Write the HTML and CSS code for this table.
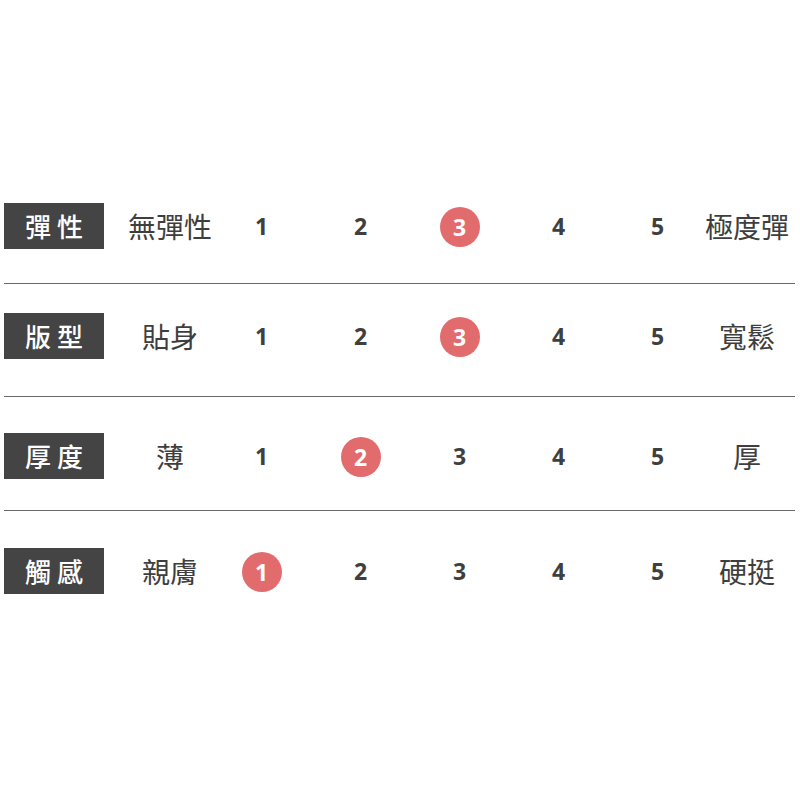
FILE: index.html
```html
<!DOCTYPE html>
<html lang="zh-Hant">
<head>
<meta charset="utf-8">
<title>尺寸感受</title>
<link rel="stylesheet" href="styles.css">
</head>
<body>
<div class="chart">
  <div class="row row-1">
    <div class="label">彈性</div>
    <div class="cell text">無彈性</div>
    <div class="cell num">1</div>
    <div class="cell num">2</div>
    <div class="cell num"><span class="dot">3</span></div>
    <div class="cell num">4</div>
    <div class="cell num">5</div>
    <div class="cell text">極度彈</div>
  </div>
  <div class="row row-2">
    <div class="label">版型</div>
    <div class="cell text">貼身</div>
    <div class="cell num">1</div>
    <div class="cell num">2</div>
    <div class="cell num"><span class="dot">3</span></div>
    <div class="cell num">4</div>
    <div class="cell num">5</div>
    <div class="cell text">寬鬆</div>
  </div>
  <div class="row row-3">
    <div class="label">厚度</div>
    <div class="cell text">薄</div>
    <div class="cell num">1</div>
    <div class="cell num"><span class="dot">2</span></div>
    <div class="cell num">3</div>
    <div class="cell num">4</div>
    <div class="cell num">5</div>
    <div class="cell text">厚</div>
  </div>
  <div class="row row-4">
    <div class="label">觸感</div>
    <div class="cell text">親膚</div>
    <div class="cell num"><span class="dot">1</span></div>
    <div class="cell num">2</div>
    <div class="cell num">3</div>
    <div class="cell num">4</div>
    <div class="cell num">5</div>
    <div class="cell text">硬挺</div>
  </div>
</div>
</body>
</html>
```

FILE: styles.css
```css
html, body {
  margin: 0;
  padding: 0;
  background: #ffffff;
}

body {
  font-family: "Noto Sans CJK TC", "Noto Sans", sans-serif;
  color: #404040;
}

.chart {
  padding: 170px 5px 0 4px;
  width: 791px;
}

.row {
  box-sizing: border-box;
  height: 113.5px;
  display: grid;
  grid-template-columns: 124px 84px repeat(5, 99px) 80px;
  grid-template-rows: 46px;
  align-items: center;
  border-bottom: 1px solid #6a6a6a;
}

.row-1 { padding-top: 33px; }
.row-2 { padding-top: 29.5px; }
.row-3 { padding-top: 36px; }
.row-4 { padding-top: 37.5px; border-bottom: none; }

.label {
  width: 100px;
  height: 46px;
  background: #444444;
  color: #ffffff;
  font-size: 26px;
  font-weight: 500;
  letter-spacing: 6px;
  text-indent: 6px;
  line-height: 46px;
  text-align: center;
  justify-self: start;
}

.cell {
  display: flex;
  justify-content: center;
  align-items: center;
  white-space: nowrap;
}

.text {
  font-size: 28px;
  font-weight: 400;
  color: #3e3e3e;
  line-height: 1;
}

.num {
  font-family: "Open Sans", "Liberation Sans", sans-serif;
  font-weight: 700;
  font-size: 23px;
  color: #3f3f3f;
  line-height: 1;
}

.dot {
  width: 40px;
  height: 40px;
  border-radius: 50%;
  background: #e26b6e;
  color: #ffffff;
  display: flex;
  align-items: center;
  justify-content: center;
  margin-top: 2px;
}
```
